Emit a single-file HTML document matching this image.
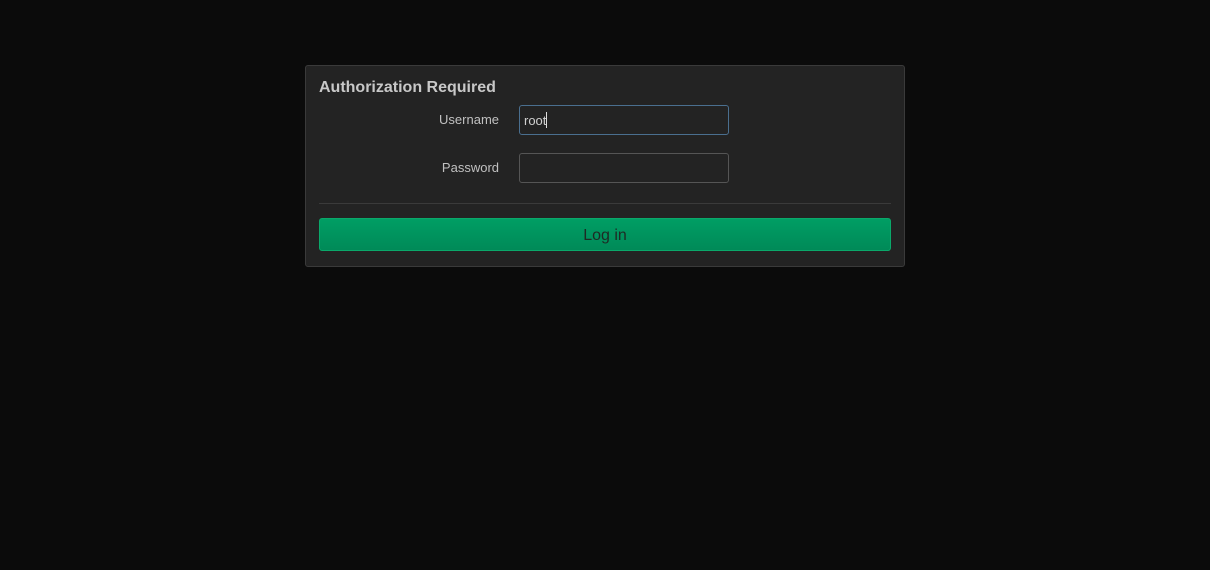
<!DOCTYPE html>
<html><head><style>
html,body{margin:0;padding:0;background:#0b0b0b;width:1210px;height:570px;overflow:hidden;font-family:"Liberation Sans",sans-serif;}
.box{position:absolute;left:305px;top:65px;width:598px;height:200px;background:#232323;border:1px solid #3a3a3a;border-radius:3px;}
h2{position:absolute;left:13px;top:13px;margin:0;font-size:16px;font-weight:bold;color:#c8c8c8;}
.lbl{position:absolute;right:405px;font-size:13px;color:#c0c0c0;}
.in{position:absolute;left:213px;width:210px;height:30px;border:1px solid #555;border-radius:3px;background:#232323;box-sizing:border-box;}
.u{border-color:#4a6f8f;top:39px;}
.p{top:87px;}
.u span{position:absolute;left:4px;top:7px;font-size:13px;color:#d0d0d0;}
.u i{position:absolute;left:26px;top:6px;width:1px;height:16px;background:#ddd;}
hr{position:absolute;left:13px;top:137px;width:572px;margin:0;border:0;border-top:1px solid #3a3a3a;}
.btn{position:absolute;left:13px;top:152px;width:572px;height:33px;box-sizing:border-box;border:1px solid #0aa86a;border-radius:3px;background:linear-gradient(#009e64,#008a58);color:#1e2a24;font-size:16px;text-align:center;line-height:33px;}
</style></head><body>
<div class="box">
<h2>Authorization Required</h2>
<div class="lbl" style="top:46px">Username</div>
<div class="in u"><span>root</span><i></i></div>
<div class="lbl" style="top:94px">Password</div>
<div class="in p"></div>
<hr>
<div class="btn">Log in</div>
</div>
</body></html>
